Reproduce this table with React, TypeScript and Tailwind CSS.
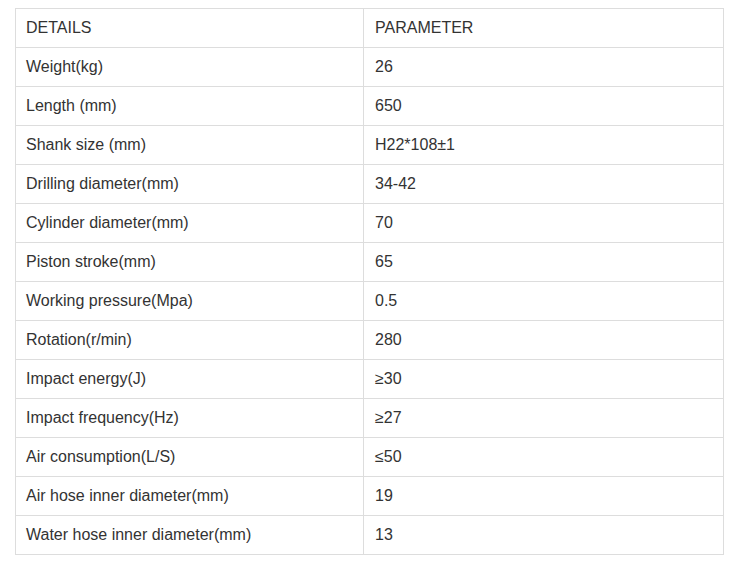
const rows: [string, string][] = [
  ["DETAILS", "PARAMETER"],
  ["Weight(kg)", "26"],
  ["Length (mm)", "650"],
  ["Shank size (mm)", "H22*108±1"],
  ["Drilling diameter(mm)", "34-42"],
  ["Cylinder diameter(mm)", "70"],
  ["Piston stroke(mm)", "65"],
  ["Working pressure(Mpa)", "0.5"],
  ["Rotation(r/min)", "280"],
  ["Impact energy(J)", "≥30"],
  ["Impact frequency(Hz)", "≥27"],
  ["Air consumption(L/S)", "≤50"],
  ["Air hose inner diameter(mm)", "19"],
  ["Water hose inner diameter(mm)", "13"],
];

export default function App() {
  return (
    <div className="w-[741px] h-[565px] bg-white overflow-hidden pt-[8px] font-['Liberation_Sans',Arial,sans-serif] text-[16px] leading-[20px] text-[#333]">
      <table className="ml-[15px] w-[709px] border-collapse border border-[#ddd]">
        <tbody>
          {rows.map(([k, v]) => (
            <tr key={k} className="h-[39px]">
              <td className="w-[348px] border border-[#ddd] px-[10px] pb-[1px] align-middle">{k}</td>
              <td className="border border-[#ddd] px-[11px] pb-[1px] align-middle">{v}</td>
            </tr>
          ))}
        </tbody>
      </table>
    </div>
  );
}
